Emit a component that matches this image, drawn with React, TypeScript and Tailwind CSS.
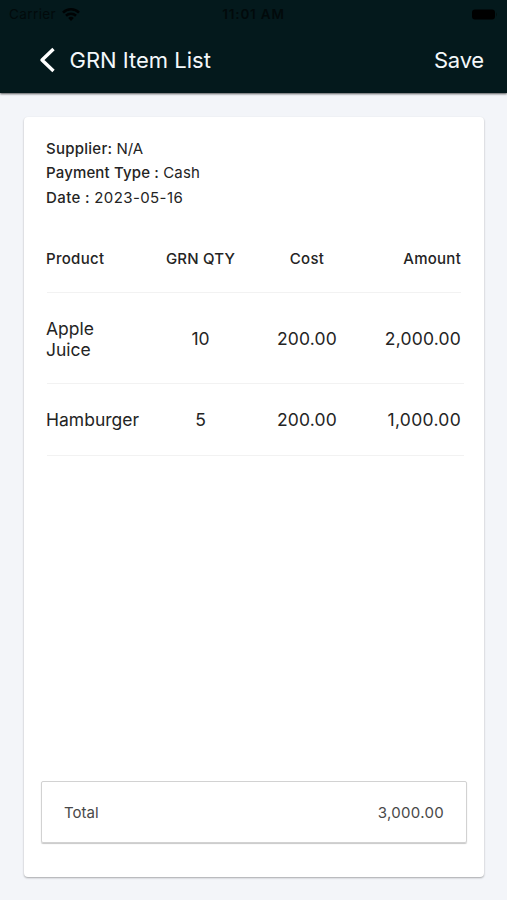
import React from 'react';

const rows = [
  { product: 'Apple Juice', qty: '10', cost: '200.00', amount: '2,000.00', height: 'h-[90px] pt-px', amountTracking: 'tracking-[0.2px]' },
  { product: 'Hamburger', qty: '5', cost: '200.00', amount: '1,000.00', height: 'h-[72px] pt-px', amountTracking: 'tracking-[0.3px]' },
];

const columns = 'grid grid-cols-[94px_121px_92px_108px] items-center';

function Divider({ className }: { className: string }) {
  return <div className={`ml-[1px] h-px bg-[#f2f2f2] ${className}`} />;
}

function StatusBar() {
  return (
    <div className="grid h-[28px] grid-cols-3 items-center px-[9px] text-[13.5px] text-[#020a0b]">
      <div className="flex items-center gap-[6px]">
        <span className="tracking-[0.4px]">Carrier</span>
        <svg width="18" height="13" viewBox="0 0 18 13" fill="none" stroke="#000304" strokeWidth="2.6">
          <path d="M1 4.6a11.4 11.4 0 0 1 16 0M4 7.8a7.2 7.2 0 0 1 10 0" />
          <path d="M9 13l-2.8-3a4 4 0 0 1 5.6 0z" fill="#000304" stroke="none" />
        </svg>
      </div>
      <span className="whitespace-nowrap text-center font-semibold tracking-[0.8px]">11:01 AM</span>
      <div className="flex justify-end">
        <svg width="27" height="13" viewBox="0 0 27 13">
          <rect x="1" y="1.5" width="23" height="10" rx="3" fill="black" />
          <path d="M25 4.5q2 2 0 4z" fill="#03100f" />
        </svg>
      </div>
    </div>
  );
}

export default function App() {
  return (
    <div className="flex h-[900px] w-[507px] flex-col bg-[#f3f5f9] font-['Inter','Liberation_Sans',sans-serif] text-[#242424]">
      <header className="h-[93px] shrink-0 bg-[#04191c] shadow-[0_1px_2px_rgba(0,0,0,0.65)]">
        <StatusBar />
        <div className="flex h-[64px] items-center pl-[39px] pr-[23px] text-[22px] text-[#f4f8fa]">
          <svg width="17" height="26" viewBox="0 0 17 26" fill="none" stroke="white" strokeWidth="3.4" strokeLinejoin="round">
            <path d="M14.5 2L3 13l11.5 11" />
          </svg>
          <h1 className="ml-[13.5px] flex-1">GRN Item List</h1>
          <button className="tracking-[-0.2px]">Save</button>
        </div>
      </header>
      <main className="ml-[24px] mr-[23px] mt-[24px] flex h-[760px] flex-col rounded-[4px] bg-white shadow-[0_1px_2px_rgba(0,0,0,0.32)]">
        <div className="h-[92px] px-[22px] pt-[20px] text-[15px] leading-[24.3px]">
          <p><span className="font-medium tracking-[0.25px]">Supplier:</span> N/A</p>
          <p><span className="font-medium tracking-[0.15px]">Payment Type :</span> <span className="tracking-[0.2px]">Cash</span></p>
          <p><span className="font-medium tracking-[0.4px]">Date :</span> <span className="tracking-[0.4px]">2023-05-16</span></p>
        </div>
        <div className="ml-[22px] mr-[20px] mt-[16px]">
          <div className={`${columns} h-[67px] pt-[1px] text-[15px] font-medium`}>
            <span className="tracking-[0.3px]">Product</span>
            <span className="text-center tracking-[0.2px]">GRN QTY</span>
            <span className="text-center tracking-[0.3px]">Cost</span>
            <span className="text-right tracking-[0.25px]">Amount</span>
          </div>
          <Divider className="mr-[3px]" />
          {rows.map((row) => (
            <div key={row.product} className={row.height}>
              <div className={`${columns} h-full text-[17.5px] leading-[21px]`}>
                <span>{row.product}</span>
                <span className="text-center">{row.qty}</span>
                <span className="text-center tracking-[0.15px]">{row.cost}</span>
                <span className={`text-right ${row.amountTracking}`}>{row.amount}</span>
              </div>
              <Divider className="" />
            </div>
          ))}
        </div>
        <div className="mx-[17px] mb-[34px] mt-auto flex h-[62px] items-center justify-between rounded-[2px] border border-[#d2d2d2] px-[22px] pt-[3px] text-[15px] text-[#484848] shadow-[0_1px_1px_rgba(0,0,0,0.22)]">
          <span>Total</span>
          <span className="tracking-[0.3px]">3,000.00</span>
        </div>
      </main>
    </div>
  );
}
